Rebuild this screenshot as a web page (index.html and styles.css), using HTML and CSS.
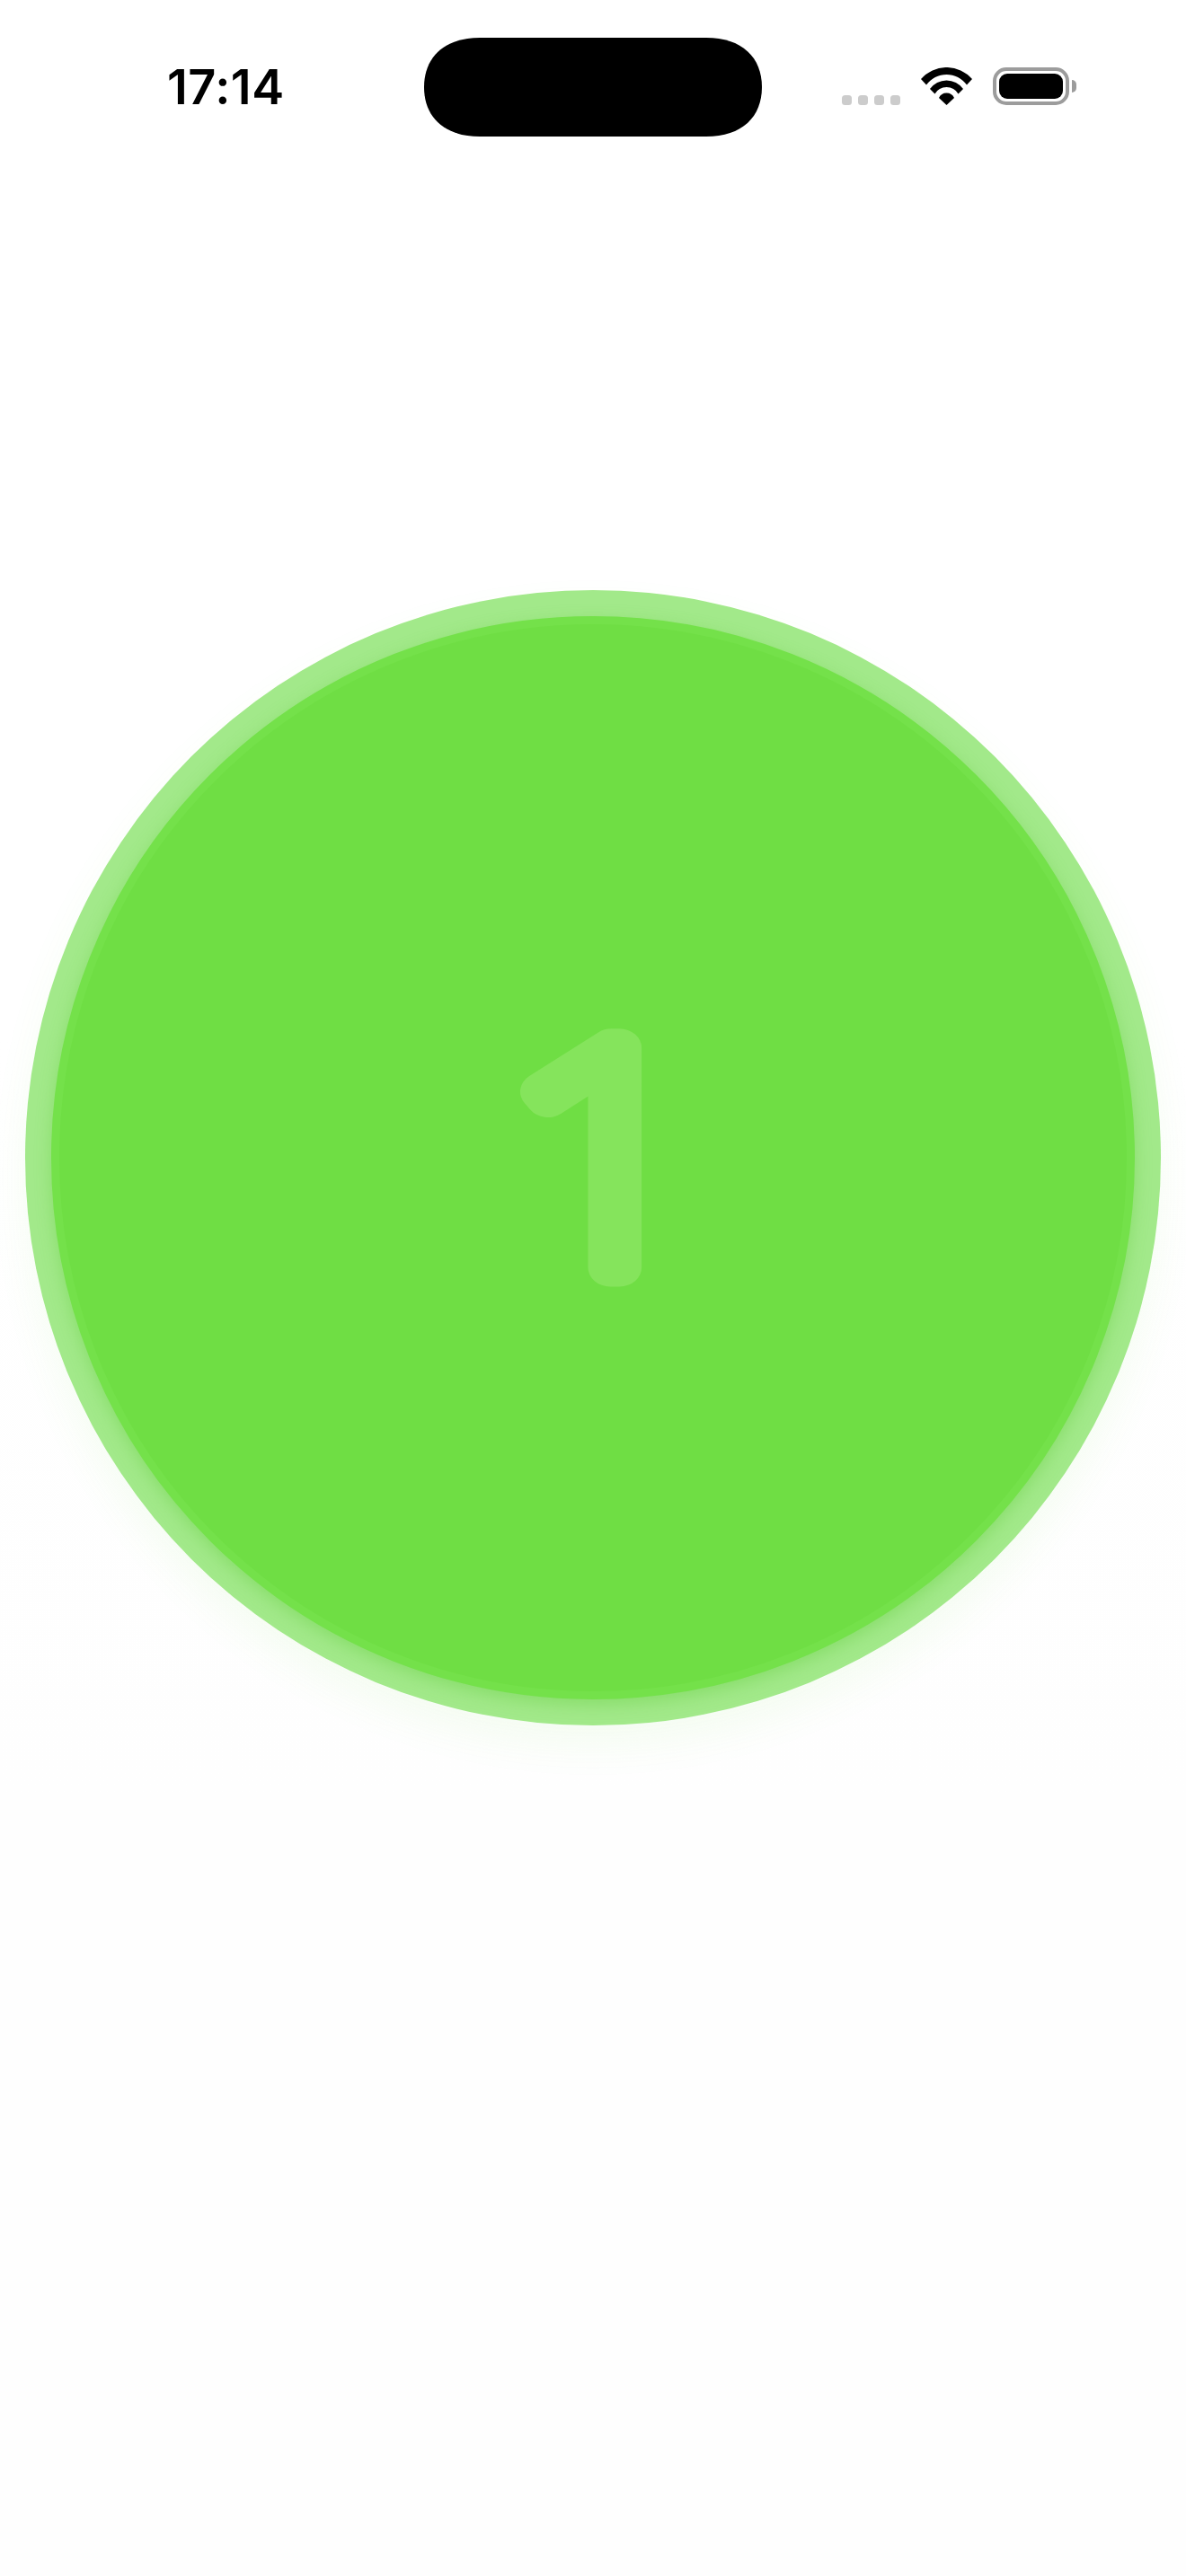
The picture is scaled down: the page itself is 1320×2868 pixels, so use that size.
FILE: index.html
```html
<!DOCTYPE html>
<html>

<head>
  <link rel="stylesheet" href="styles.css">
</head>

<body>
  <div class="status-bar">
    <div class="time">17:14</div>
    <svg class="island" width="376" height="110" viewBox="0 0 376 110">
      <path d="M62 0H314C354 0 376 22 376 55C376 88 354 110 314 110H62C22 110 0 88 0 55C0 22 22 0 62 0Z" />
    </svg>
    <div class="signal">
      <span class="dot"></span>
      <span class="dot"></span>
      <span class="dot"></span>
      <span class="dot"></span>
    </div>
    <svg class="wifi" width="57" height="42" viewBox="0 0 57 42">
      <path d="M0 13A37.700 37.700 0 0 1 57 13L51 19.500A27.800 27.800 0 0 0 6 19.500Z" />
      <path d="M10 24A22.700 22.700 0 0 1 47 24L41.500 29.500A15 15 0 0 0 15.500 29.500Z" />
      <path d="M20 34A9.300 9.300 0 0 1 37 34L28.500 42Z" />
    </svg>
    <div class="battery">
      <div class="battery-level"></div>
    </div>
    <div class="battery-cap"></div>
  </div>

  <div class="main">
    <div class="dial">
      <div class="dial-inner">
        <svg class="digit" width="500" height="500" viewBox="0 0 500 500">
          <text x="231" y="372">1</text>
        </svg>
      </div>
    </div>
  </div>
</body>

</html>
```

FILE: styles.css
```css
body {
  margin: 0;
  height: 2868px;
  overflow: hidden;
  font-family: 'Inter', sans-serif;
  background: linear-gradient(#ffffff 40%, #fefefe 70%);
}

.status-bar {
  display: flex;
  align-items: flex-start;
  height: 152px;
  padding: 42px 0 0 186px;
  box-sizing: border-box;
}

.time {
  width: 286px;
  margin-top: 25px;
  font-size: 54px;
  line-height: 60px;
  font-weight: 600;
  letter-spacing: 0.5px;
  color: #000;
}

.island {
  flex-shrink: 0;
  fill: #000;
}

.signal {
  display: flex;
  gap: 7px;
  margin: 64px 0 0 89px;
}

.dot {
  width: 11px;
  height: 11px;
  background: #cccccc;
  border-radius: 3.500px;
}

.wifi {
  margin: 33px 0 0 23px;
  fill: #000;
}

.battery {
  width: 85px;
  height: 42px;
  margin: 33px 0 0 23px;
  padding: 3px;
  box-sizing: border-box;
  border: 4px solid #9c9c9c;
  border-radius: 15px;
  background: #fff;
}

.battery-level {
  height: 100%;
  background: #000;
  border-radius: 9px;
}

.battery-cap {
  width: 5px;
  height: 14px;
  margin: 47px 0 0 3px;
  background: #9c9c9c;
  border-radius: 0 7px 7px 0;
}

.main {
  display: flex;
  justify-content: center;
  padding-top: 505px;
}

.dial {
  width: 1264px;
  height: 1264px;
  padding: 29px;
  box-sizing: border-box;
  border-radius: 50%;
  background: #a2e98a;
  box-shadow: 0 22px 44px rgba(112, 225, 72, 0.07);
}

.dial-inner {
  display: flex;
  align-items: center;
  justify-content: center;
  width: 100%;
  height: 100%;
  box-sizing: border-box;
  border: 9px solid #74e14a;
  border-radius: 50%;
  background: #6fde44;
  box-shadow: 0 6px 18px rgba(90, 200, 50, 0.35);
}

.digit text {
  font-family: 'Noto Sans', sans-serif;
  font-size: 342px;
  font-weight: 100;
  text-anchor: middle;
  fill: #85e45c;
  stroke: #85e45c;
  stroke-width: 43px;
  stroke-linejoin: round;
  stroke-linecap: round;
  transform: scaleX(1.15);
}
```
